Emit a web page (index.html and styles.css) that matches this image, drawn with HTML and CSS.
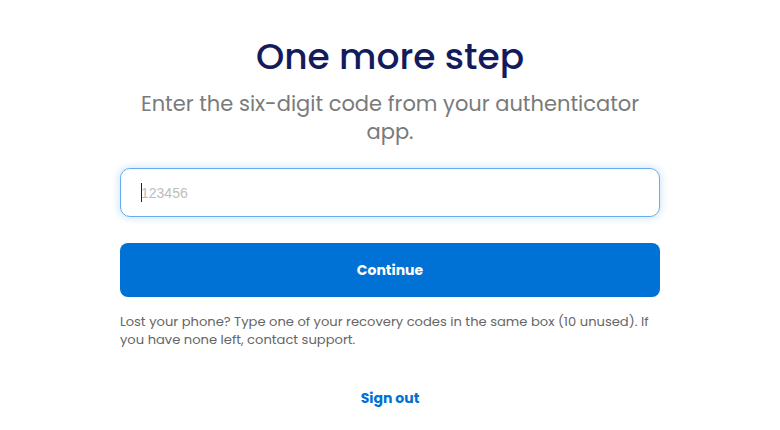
FILE: index.html
```html
<!DOCTYPE html>
<html lang="en">
<head>
<meta charset="utf-8">
<title>One more step</title>
<link rel="stylesheet" href="styles.css">
</head>
<body>
<main class="page">
  <section class="card">
    <h1 class="title">One more step</h1>
    <p class="subtitle">Enter the six-digit code from your authenticator app.</p>
    <form class="form">
      <div class="field">
        <input class="code-input" type="text" placeholder="123456">
        <span class="caret"></span>
      </div>
      <button class="btn-primary" type="button">Continue</button>
    </form>
    <p class="help">Lost your phone? Type one of your recovery codes in the same box (10 unused). If you have none left, contact support.</p>
    <a class="signout" href="#">Sign out</a>
  </section>
</main>
</body>
</html>
```

FILE: styles.css
```css
* { box-sizing: border-box; }
html, body { margin: 0; padding: 0; background: #ffffff; }
body { font-family: "Poppins", "Open Sans", "DejaVu Sans", sans-serif; }
.page { display: flex; justify-content: center; padding-top: 30px; }
.card { width: 540px; display: flex; flex-direction: column; align-items: stretch; }
.title { margin: 0; text-align: center; font-size: 36px; font-weight: 500; line-height: 54px; color: #141b5c; }
.subtitle { margin: 6px 0 0; text-align: center; font-size: 21px; line-height: 28px; color: #7a7a7a; padding: 0 10px; }
.form { display: flex; flex-direction: column; gap: 26px; margin-top: 22px; }
.field { position: relative; }
.code-input { display: block; height: 49px; width: 100%; border: 1px solid #64aef0; border-radius: 10px; padding: 0 20px; font-family: "Liberation Sans", Arial, sans-serif; font-size: 14px; color: #222; outline: none; box-shadow: 0 0 6px 2px rgba(100,170,240,0.25); }
.code-input::placeholder { color: #bdbdbd; }
.caret { position: absolute; left: 21px; top: 15px; width: 1px; height: 19px; background: #141b5c; }
.btn-primary { height: 54px; width: 100%; border: none; border-radius: 8px; background: #0071d5; color: #fff; font-family: inherit; font-weight: 700; font-size: 14px; }
.help { margin: 16px 0 0; font-size: 13.1px; line-height: 18px; color: #666; }
.signout { margin-top: 39px; align-self: center; font-weight: 700; font-size: 14px; color: #0071d5; text-decoration: none; }
```
